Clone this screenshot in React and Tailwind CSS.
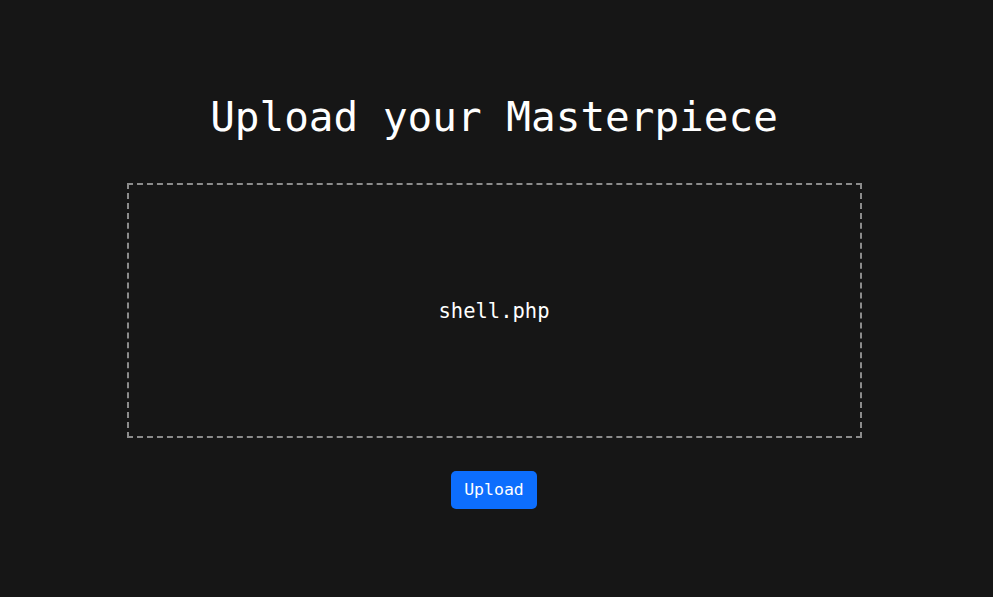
export default function App() {
  return (
    <div
      className="min-h-[597px] w-full bg-[#161616] text-white"
      style={{ fontFamily: '"DejaVu Sans Mono", "Liberation Mono", monospace' }}
    >
      <div className="flex w-[988px] flex-col items-center pt-[93px]">
        <h1 className="text-[41px] leading-[48px] font-normal">Upload your Masterpiece</h1>

        <div className="mt-[42px] flex h-[255px] w-[735px] items-center justify-center border-2 border-dashed border-[#8c8c8c]">
          <span className="text-[20.5px] leading-[28px]">shell.php</span>
        </div>

        <button className="mt-[33px] rounded-[5px] bg-[#0d6efd] px-[13px] py-[7px] text-[16.5px] leading-[24px] text-white">
          Upload
        </button>
      </div>
    </div>
  );
}
